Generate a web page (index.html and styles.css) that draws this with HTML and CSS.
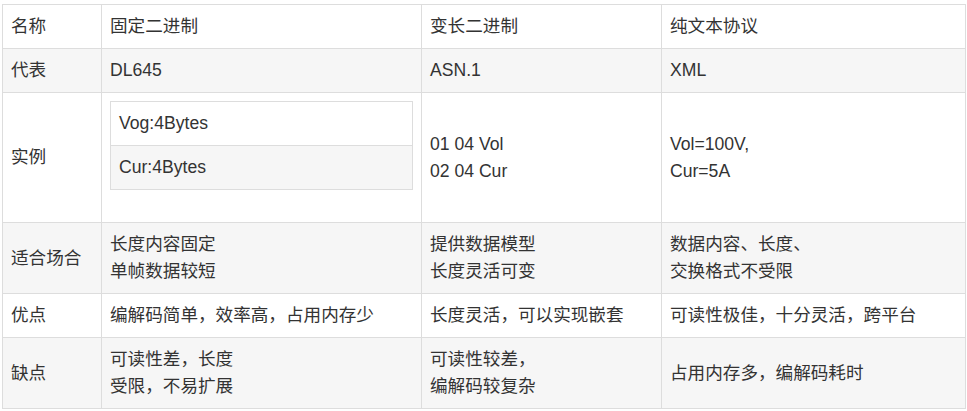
FILE: index.html
```html
<!DOCTYPE html>
<html lang="zh">
<head>
<meta charset="utf-8">
<link rel="stylesheet" href="styles.css">
</head>
<body>
<div class="wrap">
<table class="grid">
  <colgroup>
    <col class="c1"><col class="c2"><col class="c3"><col class="c4">
  </colgroup>
  <tbody>
    <tr><td>名称</td><td>固定二进制</td><td>变长二进制</td><td>纯文本协议</td></tr>
    <tr><td>代表</td><td>DL645</td><td>ASN.1</td><td>XML</td></tr>
    <tr>
      <td>实例</td>
      <td>
        <table class="inner">
          <tbody>
            <tr><td>Vog:4Bytes</td></tr>
            <tr><td>Cur:4Bytes</td></tr>
          </tbody>
        </table>
      </td>
      <td>01 04 Vol<br>02 04 Cur</td>
      <td>Vol=100V,<br>Cur=5A</td>
    </tr>
    <tr><td>适合场合</td><td>长度内容固定<br>单帧数据较短</td><td>提供数据模型<br>长度灵活可变</td><td>数据内容、长度、<br>交换格式不受限</td></tr>
    <tr><td>优点</td><td>编解码简单，效率高，占用内存少</td><td>长度灵活，可以实现嵌套</td><td>可读性极佳，十分灵活，跨平台</td></tr>
    <tr><td>缺点</td><td>可读性差，长度<br>受限，不易扩展</td><td>可读性较差，<br>编解码较复杂</td><td>占用内存多，编解码耗时</td></tr>
  </tbody>
</table>
</div>
</body>
</html>
```
FILE: styles.css
```css
html, body {
  margin: 0;
  padding: 0;
  background: #fff;
}
.wrap {
  padding: 4px 2px 0 2px;
}
table {
  border-collapse: collapse;
  border-spacing: 0;
}
.grid {
  width: 963px;
  table-layout: fixed;
  border: 1px solid #ddd;
  font-family: "Liberation Sans", "Noto Sans CJK SC", sans-serif;
  font-size: 17.6px;
  line-height: 27px;
  color: #333;
}
.c1 { width: 99px; }
.c2 { width: 320px; }
.c3 { width: 240px; }
.c4 { width: 304px; }
.grid td {
  border: 1px solid #ddd;
  padding: 8px;
  vertical-align: middle;
  text-align: left;
}
.grid > tbody > tr:nth-child(even) > td {
  background: #f6f6f6;
}
.inner {
  width: 100%;
  border: 1px solid #ddd;
  margin-bottom: 24px;
}
.inner td {
  background: #fff;
}
.inner tr:nth-child(even) td {
  background: #f6f6f6;
}
```
